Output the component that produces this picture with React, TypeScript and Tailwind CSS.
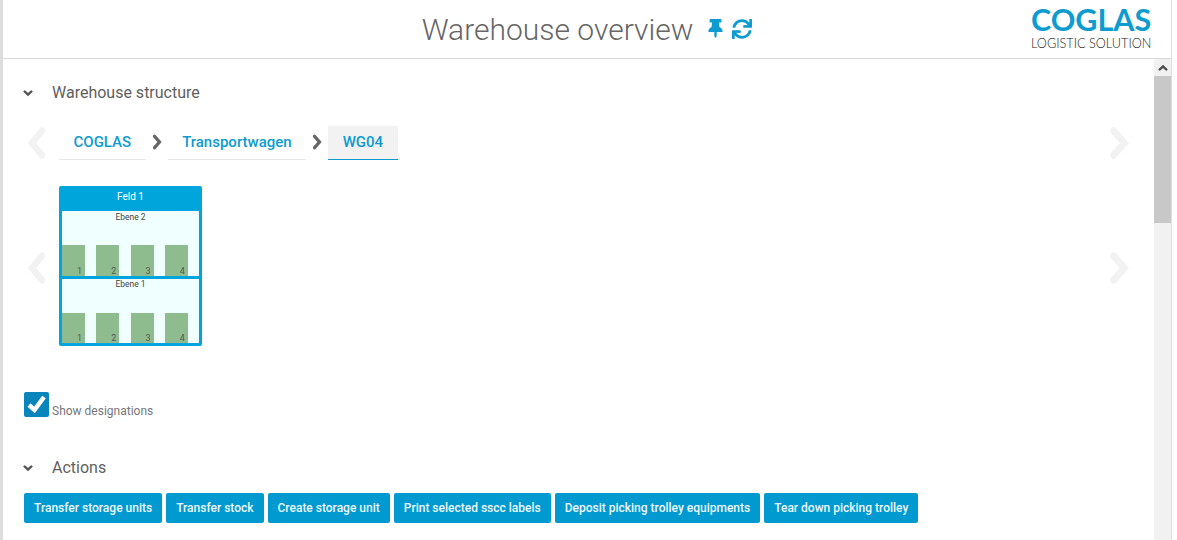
import * as React from 'react';
import { FaSync, FaThumbtack } from 'react-icons/fa';

const actions = [
  'Transfer storage units',
  'Transfer stock',
  'Create storage unit',
  'Print selected sscc labels',
  'Deposit picking trolley equipments',
  'Tear down picking trolley',
];

// thick rounded chevron, pointing right by default
function Chevron({ dir = 'right', className }: { dir?: 'left' | 'right' | 'down' | 'up'; className?: string }) {
  const points = {
    right: '7,4 17,14 7,24',
    left: '17,4 7,14 17,24',
    down: '4,9 12,17 20,9',
    up: '4,17 12,9 20,17',
  }[dir];
  const box = dir === 'up' || dir === 'down' ? '0 0 24 26' : '0 0 24 28';
  return (
    <svg viewBox={box} preserveAspectRatio="none" className={className} fill="none" stroke="currentColor" strokeWidth={6} strokeLinecap="round" strokeLinejoin="miter">
      <polyline points={points} />
    </svg>
  );
}

function SectionTitle({ label }: { label: string }) {
  return (
    <div className="flex items-center h-6">
      <Chevron dir="down" className="ml-[20px] w-[10px] h-[10px] text-[#555]" />
      <span className="ml-[19px] text-[16px] text-[#5f5f5f]">{label}</span>
    </div>
  );
}

function Crumb({ label, active }: { label: string; active?: boolean }) {
  return (
    <div
      className={
        active
          ? 'h-[34px] px-[14.5px] flex items-center bg-[#f2f2f2] border-b border-[#0d9bd0] text-[15px] font-medium text-[#0d9bd0]'
          : 'h-[34px] px-[14.5px] flex items-center border-b border-[#e8e8e8] text-[15px] font-medium text-[#0d9bd0]'
      }
    >
      {label}
    </div>
  );
}

function Level({ label, short }: { label: string; short?: boolean }) {
  return (
    <div className={short ? 'h-[64px] bg-[#f0ffff] flex flex-col justify-between' : 'h-[65px] bg-[#f0ffff] flex flex-col justify-between'}>
      <div className={short ? 'text-center text-[8.5px] leading-[10px] text-[#444]' : 'text-center text-[8.5px] leading-[12px] text-[#444]'}>{label}</div>
      <div className="grid grid-cols-4">
        {[1, 2, 3, 4].map((n) => (
          <div
            key={n}
            className={
              short
                ? 'w-[23px] h-[30px] bg-[#8fbc8f] flex items-end justify-end pr-[3px] text-[9px] leading-[10px] text-[#555]'
                : 'w-[23px] h-[31px] bg-[#8fbc8f] flex items-end justify-end pr-[3px] text-[9px] leading-[10px] text-[#555]'
            }
          >
            {n}
          </div>
        ))}
      </div>
    </div>
  );
}

export default function App() {
  return (
    <div className="h-[540px] w-[1177px] overflow-hidden bg-white font-['Roboto',sans-serif]">
      <div className="h-full w-[1172px] border-l-[3px] border-r border-[#dddddd] border-r-[#e0e0e0] flex flex-col">
        {/* Header */}
        <header className="h-[59px] shrink-0 border-b border-[#d9d9d9] relative flex items-center justify-center">
          <span className="text-[30px] font-light text-[#666]">Warehouse overview</span>
          <FaThumbtack className="ml-[15px] w-[15px] h-[19px] text-[#0d9bd0] -mt-[1px]" />
          <FaSync className="ml-[9px] w-[20px] h-[20px] text-[#0d9bd0] -mt-[1px]" />
          <div className="absolute left-[1028px] top-[4px] w-[122px] flex flex-col items-start">
            <span className="font-['Lato',sans-serif] font-bold text-[30.5px] leading-[31px] text-[#0d9bd0]">COGLAS</span>
            <span className="mt-[1px] font-['Lato',sans-serif] font-light text-[12.7px] leading-[14px] whitespace-nowrap text-[#222]">LOGISTIC SOLUTION</span>
          </div>
        </header>

        <div className="flex-1 flex min-h-0">
          <main className="flex-1 pt-[22px]">
            <SectionTitle label="Warehouse structure" />

            {/* Breadcrumb */}
            <div className="mt-[21px] flex items-center h-[34px] pl-[22px] pr-[22px]">
              <Chevron dir="left" className="w-[24px] h-[34px] text-[#f2f2f2]" />
              <div className="ml-[10px] flex items-center">
                <Crumb label="COGLAS" />
                <Chevron className="mx-[5px] w-[12px] h-[16px] text-[#666] -mt-[3px]" />
                <Crumb label="Transportwagen" />
                <Chevron className="mx-[5px] w-[12px] h-[16px] text-[#666] -mt-[3px]" />
                <Crumb label="WG04" active />
              </div>
              <Chevron className="ml-auto w-[26px] h-[34px] text-[#f2f2f2]" />
            </div>

            {/* Rack */}
            <div className="mt-[26px] flex items-center pl-[22px] pr-[22px]">
              <Chevron dir="left" className="mt-[4px] w-[24px] h-[34px] text-[#f2f2f2]" />
              <div className="ml-[10px] w-[143px] rounded-[2px] bg-[#00a5dc] px-[3px] pb-[3px]">
                <div className="h-[25px] text-center text-[10px] font-normal leading-[22px] text-white">Feld 1</div>
                <Level label="Ebene 2" />
                <div className="mt-[3px]">
                  <Level label="Ebene 1" short />
                </div>
              </div>
              <Chevron className="mt-[4px] ml-auto w-[26px] h-[34px] text-[#f2f2f2]" />
            </div>

            {/* Checkbox */}
            <div className="mt-[46px] ml-[21px] flex items-end">
              <div className="w-[25px] h-[25px] rounded-[2px] bg-[#0a85bb] flex items-center justify-center">
                <svg viewBox="0 0 25 25" className="w-[25px] h-[25px]" fill="none" stroke="white" strokeWidth={4.5}>
                  <polyline points="5,13 10.5,18 20,5" />
                </svg>
              </div>
              <span className="ml-[3px] text-[12px] leading-[13px] text-[#777] translate-y-[1px]">Show designations</span>
            </div>

            <div className="mt-[39px]">
              <SectionTitle label="Actions" />
            </div>

            {/* Actions */}
            <div className="mt-[13px] ml-[21px] flex gap-[4px]">
              {actions.map((a) => (
                <button key={a} className="h-[30px] px-[10px] rounded-[2px] bg-[#009ad0] text-[12px] font-medium text-[#eef8fc] whitespace-nowrap">
                  {a}
                </button>
              ))}
            </div>
          </main>

          {/* Scrollbar */}
          <div className="w-[17px] shrink-0 bg-[#f1f1f1] flex flex-col">
            <div className="h-[17px] flex items-center justify-center">
              <Chevron dir="up" className="w-[10px] h-[10px] text-[#505050]" />
            </div>
            <div className="h-[147px] bg-[#c8c8c8]" />
          </div>
        </div>
      </div>
    </div>
  );
}
